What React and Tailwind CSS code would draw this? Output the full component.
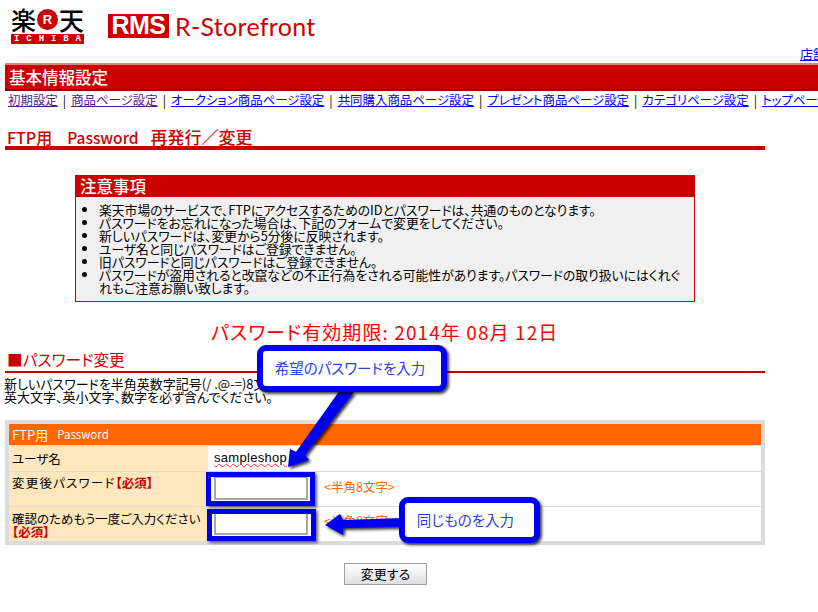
import React from 'react';

const jp = "font-['Noto_Sans_CJK_JP','Noto_Sans',sans-serif] [font-feature-settings:'palt']";

const navItems = [
  { label: '初期設定', visited: true },
  { label: '商品ページ設定', visited: true },
  { label: 'オークション商品ページ設定' },
  { label: '共同購入商品ページ設定' },
  { label: 'プレゼント商品ページ設定' },
  { label: 'カテゴリページ設定' },
  { label: 'トップページ設定' },
];

const notices = [
  '楽天市場のサービスで、FTPにアクセスするためのIDとパスワードは、共通のものとなります。',
  'パスワードをお忘れになった場合は、下記のフォームで変更をしてください。',
  '新しいパスワードは、変更から5分後に反映されます。',
  'ユーザ名と同じパスワードはご登録できません。',
  '旧パスワードと同じパスワードはご登録できません。',
  <>パスワードが盗用されると改竄などの不正行為をされる可能性があります。パスワードの取り扱いにはくれぐ<br />れもご注意お願い致します。</>,
];

function Logos() {
  return (
    <div className="flex h-[47px] items-start pl-[11px] pt-[8px]">
      <div className="flex w-[73px] flex-col">
        <div className="flex h-[26px] items-center justify-between pb-[3px] text-[25px] leading-[23px] font-medium text-black">
          <span>楽</span>
          <span className="flex h-[21px] w-[21px] shrink-0 items-center justify-center rounded-full bg-[#cc0000] font-['Liberation_Sans',sans-serif] text-[13px] font-bold text-white">R</span>
          <span>天</span>
        </div>
        <div className="flex h-[10px] items-center justify-between bg-[#cc0000] px-[3px] font-['Liberation_Mono',monospace] text-[9px] leading-[10px] font-bold text-white">
          {'ICHIBA'.split('').map((c, i) => <span key={i}>{c}</span>)}
        </div>
      </div>
      <div className="mt-[6px] ml-[24px] flex h-[24px] w-[61px] items-center justify-center bg-[#cc0000] font-['Liberation_Sans',sans-serif] text-[25px] font-bold tracking-[-0.5px] text-white">RMS</div>
      <div className="mt-[4px] ml-[6px] font-['Lato',sans-serif] text-[25px] leading-[28px] tracking-[0.3px] text-[#cc0000]">R-Storefront</div>
    </div>
  );
}

function Nav() {
  return (
    <div className="ml-[3px] flex h-[18px] items-center overflow-hidden pl-[5px] text-[12.45px] leading-[16px] whitespace-nowrap">
      {navItems.map((item, i) => (
        <span key={item.label} className="shrink-0">
          {i > 0 && <span className="mx-[5px] text-black">|</span>}
          <a href="#" className={item.visited ? 'text-[#551a8b] underline' : 'text-[#0000ff] underline'}>{item.label}</a>
        </span>
      ))}
    </div>
  );
}

function Notice() {
  return (
    <div className="mt-[25px] ml-[75px] w-[620px] border border-[#cc0000] bg-[#f0f0f0]">
      <div className="flex h-[21px] items-center bg-[#cc0000] pl-[4px] text-[16.5px] font-medium text-white">注意事項</div>
      <ul className="list-disc pt-[6px] pb-[7px] pl-[23px] text-[12.8px] leading-[13px] whitespace-nowrap text-black">
        {notices.map((n, i) => <li key={i}>{n}</li>)}
      </ul>
    </div>
  );
}

function Row({ label, children, className }) {
  return (
    <div className={`flex border-t border-[#dcdcdc] ${className}`}>
      <div className="w-[199px] shrink-0 bg-[#fee6bd] pl-[3px] text-[12.5px] leading-[13px] whitespace-nowrap text-black">{label}</div>
      <div className="flex-1 bg-white pl-[6px] text-[13px] text-black">{children}</div>
    </div>
  );
}

function Required() {
  return <span className="font-bold text-[#cc0000]">【必須】</span>;
}

function PasswordForm() {
  return (
    <div className="mt-[17px] ml-[5px] w-[760px] bg-[#dcdcdc] p-[4px]">
      <div className="flex h-[21px] items-center bg-[#ff6600] pl-[3px] text-[11.5px] text-white">
        <span className="text-[13px]">FTP用</span>
        <span className="ml-[9px]">Password</span>
      </div>
      <Row className="h-[26px]" label={<div className="pt-[6px]">ユーザ名</div>}>
        <div className="pt-[3px] font-['Liberation_Sans',sans-serif] text-[13px] leading-[18px] tracking-[0.3px]">
          <span className="underline decoration-red-500 decoration-wavy decoration-1">sampleshop</span>
        </div>
      </Row>
      <Row className="h-[35px]" label={<div className="pt-[4px]"><span className="tracking-[1.2px]">変更後パスワード</span><Required /></div>}>
        <div className="flex items-start pt-[4px]">
          <div className="h-[24px] w-[94px] border-2 border-[#a8a8a8] bg-white" />
          <span className="ml-[16px] pt-[3px] text-[12.5px] leading-[16px] text-[#ff6600]">&lt;半角8文字&gt;</span>
        </div>
      </Row>
      <Row className="h-[35px]" label={<div className="pt-[5px]">確認のためもう一度ご入力ください<br /><Required /></div>}>
        <div className="flex items-start pt-[5px]">
          <div className="h-[23px] w-[94px] border-2 border-[#a8a8a8] bg-white" />
          <span className="ml-[16px] pt-[1px] text-[12.5px] leading-[16px] text-[#ff6600]">&lt;半角8文字&gt;</span>
        </div>
      </Row>
    </div>
  );
}

// Blue annotations drawn on top of the screenshot
function Annotations() {
  const callout = "absolute flex items-center justify-center rounded-[9px] border-[6px] border-[#0000f0] bg-white pb-[1px] text-[#2a3fe0] shadow-[2px_2px_3px_rgba(0,0,0,0.75)]";
  return (
    <>
      <svg className="absolute top-0 left-0" width="818" height="612" viewBox="0 0 818 612">
        <defs>
          <filter id="arrowShadow" x="-30%" y="-30%" width="160%" height="160%">
            <feDropShadow dx="2" dy="2" stdDeviation="1.5" floodColor="#000" floodOpacity="0.8" />
          </filter>
        </defs>
        <g fill="#0000f0" filter="url(#arrowShadow)">
          <polygon points="340,390 354,392 305,455 309,460 288,467 290,449 296,452" />
          <polygon points="325,525 340,514 343,520 402,518 402,527 343,528 343,535" />
        </g>
      </svg>
      <div className="absolute top-[472px] left-[206px] h-[34px] w-[109px] border-[5px] border-[#0000f0] shadow-[2px_2px_3px_rgba(0,0,0,0.6)]" />
      <div className="absolute top-[509px] left-[207px] h-[32px] w-[109px] border-[5px] border-[#0000f0] shadow-[2px_2px_3px_rgba(0,0,0,0.6)]" />
      <div className={`${callout} top-[345px] left-[257px] h-[47px] w-[190px] pr-[4px] text-[14.5px]`}>希望のパスワードを入力</div>
      <div className={`${callout} top-[497px] left-[399px] h-[46px] w-[141px] pr-[8px] text-[14.5px]`}>同じものを入力</div>
    </>
  );
}

export default function App() {
  return (
    <div className={`relative h-[612px] w-[818px] overflow-hidden bg-white ${jp}`}>
      <Logos />
      <div className="h-[16px] overflow-hidden pl-[800px] text-[13px] leading-[14px] whitespace-nowrap">
        <a href="#" className="text-[#0000ff] underline">店舗情報</a>
      </div>

      <div className="ml-[5px] flex h-[28px] items-center border-t-2 border-b-2 border-t-[#e08080] border-b-[#8f0000] bg-[#cc0000] pl-[4px] text-[16.5px] font-medium text-white">基本情報設定</div>
      <Nav />

      <div className="mt-[19px] ml-[5px] flex h-[22px] w-[760px] items-center border-b-4 border-[#cc0000] pl-[2px] text-[16px] leading-[18px] font-medium whitespace-nowrap text-[#cc0000]">
        <span>FTP用</span>
        <span className="ml-[15px] text-[15.5px]">Password</span>
        <span className="ml-[12px] text-[17px]">再発行／変更</span>
      </div>

      <Notice />

      <div className="mt-[18px] h-[24px] pl-[211px] text-[19px] leading-[24px] tracking-[1.1px] whitespace-nowrap text-[#ff0000]">パスワード有効期限: 2014年 08月 12日</div>

      <div className="mt-[3px] ml-[5px] flex h-[26px] w-[760px] items-end border-b-2 border-[#cc0000] pl-[2px] text-[15.7px] leading-[22px] text-[#cc0000]">■パスワード変更</div>

      <p className="mt-[4px] ml-[4px] text-[13px] leading-[13px] text-black">
        新しいパスワードを半角英数字記号(/ .@-=)8文字以上で入力してください。<br />
        英大文字、英小文字、数字を必ず含んでください。
      </p>

      <PasswordForm />

      <button className="mt-[18px] ml-[344px] h-[22px] w-[83px] border border-[#a0a0a0] bg-gradient-to-b from-white to-[#dedede] text-[13px] leading-[18px] text-black">変更する</button>

      <Annotations />
    </div>
  );
}
